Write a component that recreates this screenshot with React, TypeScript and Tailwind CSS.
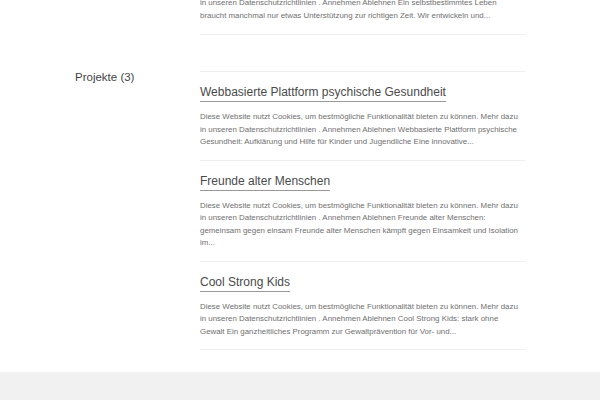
const projekte = [
  {
    title: "Webbasierte Plattform psychische Gesundheit",
    text: "Diese Website nutzt Cookies, um bestmögliche Funktionalität bieten zu können. Mehr dazu in unseren Datenschutzrichtlinien . Annehmen Ablehnen Webbasierte Plattform psychische Gesundheit: Aufklärung und Hilfe für Kinder und Jugendliche Eine innovative...",
  },
  {
    title: "Freunde alter Menschen",
    text: "Diese Website nutzt Cookies, um bestmögliche Funktionalität bieten zu können. Mehr dazu in unseren Datenschutzrichtlinien . Annehmen Ablehnen Freunde alter Menschen: gemeinsam gegen einsam Freunde alter Menschen kämpft gegen Einsamkeit und Isolation im...",
  },
  {
    title: "Cool Strong Kids",
    text: "Diese Website nutzt Cookies, um bestmögliche Funktionalität bieten zu können. Mehr dazu in unseren Datenschutzrichtlinien . Annehmen Ablehnen Cool Strong Kids: stark ohne Gewalt Ein ganzheitliches Programm zur Gewaltprävention für Vor- und...",
  },
];

function Eintrag({ title, text }: { title: string; text: string }) {
  return (
    <article className="border-b border-[#efefef] pt-[7px] pb-[11px]">
      <a href="#" className="inline-block text-[12px] leading-[18px] text-[#4a4a4a] border-b border-[#999]">
        {title}
      </a>
      <p className="mt-[8px] text-[7.9px] leading-[12.5px] text-[#6f6f6f]">{text}</p>
    </article>
  );
}

export default function App() {
  return (
    <div className="w-[600px] h-[400px] overflow-hidden bg-white font-['Liberation_Sans',Arial,sans-serif]">
      {/* Ende der vorherigen Liste */}
      <div className="-mt-[3px] flex">
        <div className="w-[200px]" />
        <div className="w-[325px]">
          <article className="border-b border-[#efefef] pb-[12px]">
            <p className="text-[7.9px] leading-[12.5px] text-[#6f6f6f]">
              in unseren Datenschutzrichtlinien . Annehmen Ablehnen Ein selbstbestimmtes Leben braucht manchmal nur etwas Unterstützung zur richtigen Zeit. Wir entwickeln und...
            </p>
          </article>
        </div>
      </div>

      <section className="mt-[36px] flex">
        <h2 className="w-[125px] ml-[75px] text-[11.5px] leading-[12px] text-[#444]">Projekte (3)</h2>
        <div className="w-[325px] border-t border-[#efefef]">
          {projekte.map((p) => (
            <Eintrag key={p.title} {...p} />
          ))}
        </div>
      </section>

      <footer className="mt-[22px] h-[40px] bg-[#f1f1f1]" />
    </div>
  );
}
